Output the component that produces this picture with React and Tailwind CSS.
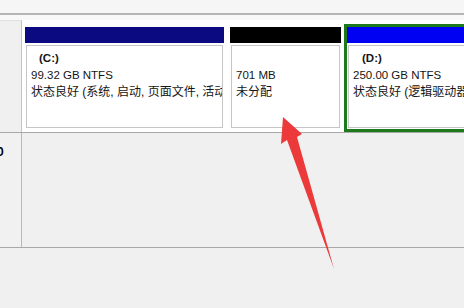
import React from "react";

const font = { fontFamily: '"Liberation Sans", "Noto Sans CJK SC", sans-serif' };

function Partition({ header, outer, w, children }) {
  return (
    <div className={`flex flex-col border-[3px] ${outer} ${w} h-[108px] shrink-0`}>
      <div className={`h-[16px] ${header} shrink-0`} />
      <div className="flex-1 bg-white pl-[1px] pt-[2px] pb-[1px] pr-[1px] flex min-w-0">
        <div className="flex-1 min-w-0 border border-[#c6c6c6] bg-white pl-[4px] pt-[4px] overflow-hidden whitespace-nowrap text-[11.5px] leading-[17px] text-[#151515]">
          {children}
        </div>
      </div>
    </div>
  );
}

export default function App() {
  return (
    <div className="relative w-[464px] h-[308px] bg-[#f0f0f0] overflow-hidden" style={font}>
      <div className="h-[13px] bg-[#f6f6f6]" />
      <div className="h-[2px] bg-[#b4b4b4]" />
      <div className="h-[5px] bg-[#f8f8f8]" />
      {/* Row 1 */}
      <div className="flex h-[113px] border-b border-[#a8a8a8]">
        <div className="w-[22px] shrink-0 bg-[#f0f0f0] border-r border-[#c4c4c4] border-t border-t-[#e0e0e0]" />
        <div className="flex-1 bg-white pt-[4px] flex overflow-hidden">
          <Partition header="bg-[#0b0a80]" outer="border-white" w="w-[205px]">
            <div className="pl-[8px] font-bold">(C:)</div>
            <div>99.32 GB NTFS</div>
            <div className="text-[12px]">状态良好 (系统, 启动, 页面文件, 活动, 故障转储, 主分区)</div>
          </Partition>
          <Partition header="bg-black" outer="border-white" w="w-[117px]">
            <div>&nbsp;</div>
            <div>701 MB</div>
            <div className="text-[12px]">未分配</div>
          </Partition>
          <Partition header="bg-[#0000f2]" outer="border-[#1c7a1c]" w="w-[140px]">
            <div className="pl-[9px] font-bold">(D:)</div>
            <div>250.00 GB NTFS</div>
            <div className="text-[12px]">状态良好 (逻辑驱动器)</div>
          </Partition>
        </div>
      </div>
      {/* Row 2 */}
      <div className="flex h-[115px] border-b border-[#a8a8a8]">
        <div className="w-[22px] shrink-0 bg-[#f1f1f1] border-r border-[#b8b8b8] overflow-hidden pt-[12px]">
          <div className="-ml-[3px] font-bold text-[12px] leading-[14px] text-black">0</div>
        </div>
        <div className="flex-1 bg-[#f0f0f0]" />
      </div>
      <svg className="absolute left-0 top-0 pointer-events-none" width="464" height="308" viewBox="0 0 464 308">
        <polygon
          points="283,117 302,134 297,137 334,269 287,140 281,144"
          fill="#ec3a3b"
        />
      </svg>
    </div>
  );
}
